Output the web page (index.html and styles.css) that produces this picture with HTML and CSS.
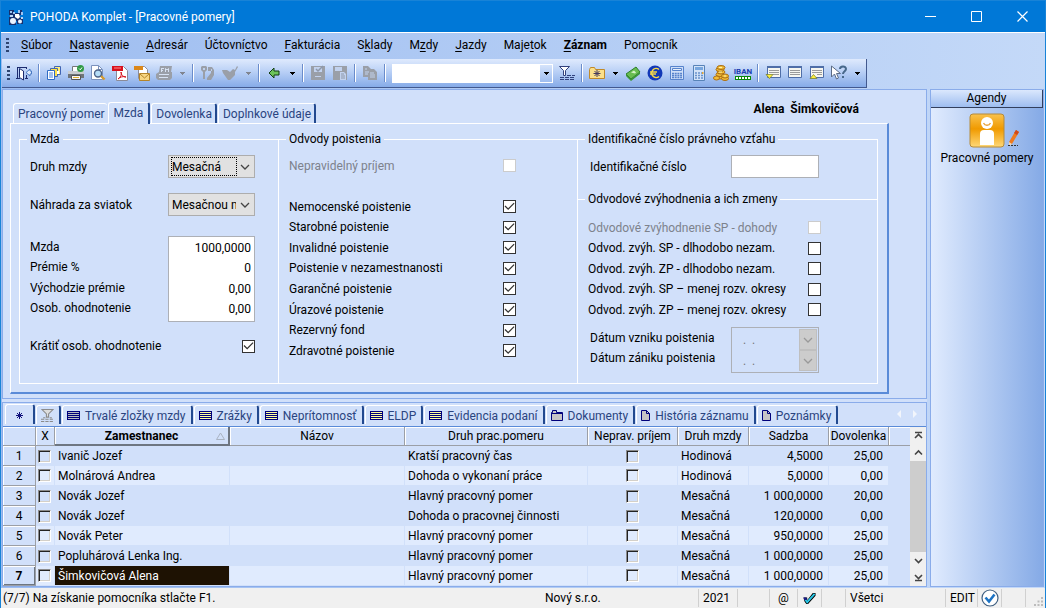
FILE: index.html
```
<!DOCTYPE html>
<html lang="sk">
<head>
<meta charset="utf-8">
<title>POHODA Komplet - [Pracovné pomery]</title>
<link rel="stylesheet" href="styles.css">
</head>
<body>
<svg class="sprite" aria-hidden="true">
  <symbol id="i-caret" viewBox="0 0 5 3"><path d="M0 0h5v1h-1v1h-1v1h-1v-1h-1v-1h-1z" fill="currentColor"/></symbol>
  <symbol id="i-chev" viewBox="0 0 10 6"><path d="M1 1l4 4 4-4" fill="none" stroke="currentColor" stroke-width="1.3"/></symbol>
  <symbol id="i-list" viewBox="0 0 13 9"><path d="M0 0h13v9H0z" fill="#00007b"/><path d="M1 1h11v1H1zM1 3h11v1H1zM1 5h11v1H1zM1 7h11v1H1z" fill="currentColor"/></symbol>
  <symbol id="i-folder" viewBox="0 0 12 11"><path d="M.5 10.500V2.500h1v-2h4v2h6v8z" fill="#c6c3c6" stroke="#00007b"/><path d="M1 3.500h10" stroke="#00007b" fill="none"/></symbol>
  <symbol id="i-page" viewBox="0 0 9 11"><path d="M.5.5h5l3 3v7h-8z" fill="#c6c3c6" stroke="#00007b"/><path d="M5.500.5v3h3" fill="none" stroke="#00007b"/></symbol>
</svg>
<div class="window">
  <header class="titlebar">
    <svg class="logo" viewBox="0 0 16 16"><path d="M1 1h5v3h4V1h4v5h-2v3h3v6H9v-3H8v4H1V8h2V6H1z" fill="#17306f"/><path d="M2 2h2v2H2zM5 3h2v2H5zM10 1h2v3h-2zM13 3h2v3h-2z" fill="#9dc4f2"/><circle cx="5" cy="12" r="3" fill="#e9f3ff"/><circle cx="12" cy="12.500" r="2" fill="#e9f3ff"/><path d="M7 5h4l1 3-2 2-3-2z" fill="#fff"/><path d="M2 6h3v2H2zM13 8h2v2h-2z" fill="#bcd7f7"/></svg>
    <h1 class="title">POHODA Komplet - [Pracovné pomery]</h1>
    <button class="winbtn" aria-label="Minimalizovať"><svg viewBox="0 0 11 11"><path d="M0 5.500h11" stroke="#fff"/></svg></button>
    <button class="winbtn" aria-label="Maximalizovať"><svg viewBox="0 0 11 11"><path d="M.5.5h10v10H.5z" stroke="#fff" fill="none"/></svg></button>
    <button class="winbtn" aria-label="Zavrieť"><svg viewBox="0 0 11 11"><path d="M.5.5l10 10M10.500.5l-10 10" stroke="#fff" stroke-width="1.200"/></svg></button>
  </header>

  <nav class="menu">
    <span class="grip"></span>
    <button><u>S</u>úbor</button><button><u>N</u>astavenie</button><button><u>A</u>dresár</button><button>Účtovní<u>c</u>tvo</button><button><u>F</u>akturácia</button><button>S<u>k</u>lady</button><button>M<u>z</u>dy</button><button><u>J</u>azdy</button><button>Maje<u>t</u>ok</button><button class="strong"><u>Z</u>áznam</button><button>Pom<u>o</u>cník</button>
  </nav>

  <div class="toolbar">
    <span class="grip"></span>
    <button class="tool" aria-label="Ukončiť"><svg viewBox="0 0 16 16"><path d="M1.500 2v11M0 13.500h4M1 2.500h10M10.500 3v1" fill="none" stroke="#1c2b6e"/><path d="M3.500 3.500l4 2.500v9l-4-2.500z" fill="#fff" stroke="#1c2b6e"/><path d="M10.500 10v4M9 13.500h3" stroke="#1c2b6e" fill="none"/><path d="M10 7.500l4-3.500v2h1.500v3H14v2z" fill="#dce9fb" stroke="#4a7ac4"/></svg></button>
    <span class="sep"></span>
    <button class="tool" aria-label="Agendy"><svg viewBox="0 0 16 16"><path d="M8.500 1.500h6v8h-6z" fill="#ffef7a" stroke="#4065b5"/><path d="M4.500 3.500h7v8h-7z" fill="#ffe14a" stroke="#4065b5"/><path d="M1.500 5.500h7v9h-7z" fill="#fff" stroke="#2f6cc4"/><path d="M3 8h4M3 10h4M3 12h4" stroke="#4a86dd"/><path d="M11 6h2v3h-2z" fill="#fff"/></svg></button>
    <button class="tool" aria-label="Tlač"><svg viewBox="0 0 16 16"><path d="M4.500 1.500h7v5h-7z" fill="#fff" stroke="#777"/><path d="M0 6h16v7H0z" fill="#6f757a"/><path d="M0 6h16v3H0z" fill="#c9cdd0"/><path d="M3.500 10.500h9v4h-9z" fill="#f7f7f7" stroke="#555"/><path d="M5 12h6v1H5z" fill="#e0b030"/><circle cx="12.500" cy="3.500" r="3.500" fill="#2f9a45"/><path d="M11 3.500l1.300 1.300L14 2.500" stroke="#fff" fill="none"/></svg></button>
    <button class="tool" aria-label="Náhľad"><svg viewBox="0 0 16 16"><path d="M1.500.5h7l4 4v10h-11z" fill="#fff" stroke="#7b92bd"/><path d="M8.500.5v4h4" fill="none" stroke="#7b92bd"/><path d="M10 10l4.500 4.500" stroke="#d59a2d" stroke-width="2.400"/><circle cx="8" cy="8.500" r="3.500" fill="#b5dcf6" stroke="#4c6389" stroke-width="1.400"/></svg></button>
    <button class="tool" aria-label="PDF"><svg viewBox="0 0 16 16"><path d="M4.500 1.500h7l4 4v10h-11z" fill="#fff" stroke="#8b8b98"/><path d="M0 1h11v5H0z" fill="#d8101c"/><path d="M2 3h7" stroke="#ff8b8b"/><path d="M6 14c3-2 4-5 3-7 0 3 2 5 5 5-3-1-6 0-8 2z" fill="none" stroke="#d8101c"/></svg></button>
    <button class="tool" aria-label="E-mail"><svg viewBox="0 0 16 16"><path d="M4.500 1.500h6l3 3v9h-9z" fill="#fff" stroke="#8b8b98"/><path d="M0 1h9v4H0z" fill="#db8719"/><path d="M5.500 8.500h10v7h-10z" fill="#f7d683" stroke="#b58428"/><path d="M6 9l4.500 4L15 9" fill="none" stroke="#b58428"/></svg></button>
    <button class="tool off" aria-label="Fiškálna tlač"><svg viewBox="0 0 16 16"><path d="M4 1h12l-1 6h1v6l-2 2H2l-2-2V9l3-2z"/><path d="M5 3.500h3M5.500 3v4M5 5.500h2M9.500 7V3.500l1.500 1.500 1.500-1.500V7M3 9.500h10M3 12.500h9" stroke="#d7e2f3" fill="none"/></svg></button>
    <button class="drop off" aria-label="Ďalšie možnosti tlače"><svg><use href="#i-caret"/></svg></button>
    <span class="sep"></span>
    <button class="tool off" aria-label="Kopírovať"><svg viewBox="0 0 16 16"><path d="M2 1h4l1 1v3L5 7v7H3V7L1 5V2zM8 2h4l2 3v5l-3 5H7v-2l4-5V6H8z"/><path d="M3 3h2v2H3zM11 4h1v2h-1z" fill="#bfd0ec"/></svg></button>
    <button class="tool off" aria-label="Prenos"><svg viewBox="0 0 16 16"><path d="M0 5h5l3 2 3-3 2 1 2-4 1 1-3 5v3l-5 5H6L1 8z"/></svg></button>
    <button class="drop off" aria-label="Ďalšie možnosti prenosu"><svg><use href="#i-caret"/></svg></button>
    <span class="sep"></span>
    <button class="tool" aria-label="Späť"><svg viewBox="0 0 16 16"><path d="M3 8l5-5v3h5v4H8v3z" fill="#6cc35a" stroke="#123f12"/></svg></button>
    <button class="drop" aria-label="História krokov"><svg><use href="#i-caret"/></svg></button>
    <span class="sep"></span>
    <button class="tool off" aria-label="Uložiť"><svg viewBox="0 0 16 16"><path d="M1 1h14v14H1z"/><path d="M4 2h8v5H4zM5 11h6v1H5z" fill="#c2d2ee"/><path d="M6 4l2 2 5-5" stroke="#8e98aa" fill="none" stroke-width="1.500"/></svg></button>
    <button class="tool off" aria-label="Uložiť kópiu"><svg viewBox="0 0 16 16"><path d="M1 1h14v14H1z"/><path d="M3 2h7v4H3zM8 7h4l2 2v6H8z" fill="#c2d2ee"/><path d="M9 9h3M9 11h4M9 13h4" stroke="#8e98aa"/></svg></button>
    <span class="sep"></span>
    <button class="tool off" aria-label="Prilepiť"><svg viewBox="0 0 16 16"><path d="M1 1h5l3 3h3l3 3v8H6v-3H1z"/><path d="M3 4h2M3 7h4M3 9h3M8 8h4M8 10h5M8 12h5" stroke="#c2d2ee"/></svg></button>
    <span class="sep"></span>
    <div class="search"><input type="text" aria-label="Hľadať"><button class="searchdrop" aria-label="Zoznam hľadania"><svg><use href="#i-caret"/></svg></button></div>
    <button class="tool" aria-label="Filter"><svg viewBox="0 0 16 16"><path d="M.5 1.500h10l-4 4v5h-2v-5z" fill="#fff" stroke="#31417c"/><path d="M1 12.500h15M1 14.500h15M8 10.500h8" stroke="#31417c" stroke-dasharray="4 1"/></svg></button>
    <span class="sep"></span>
    <button class="tool" aria-label="Nový záznam"><svg viewBox="0 0 16 16"><path d="M.5 4.500l1-2h4l1 2h9v9H.5z" fill="#fbe08b" stroke="#c08a2b"/><path d="M8 5v7M4.500 8.500h7M5.500 6l5 5M10.500 6l-5 5" stroke="#453a5c"/></svg></button>
    <button class="drop" aria-label="Priečinky"><svg><use href="#i-caret"/></svg></button>
    <button class="tool" aria-label="Pokladňa"><svg viewBox="0 0 16 16"><path d="M1 9l10-7 4 5-9 7z" fill="#69bd50" stroke="#2b7d2b"/><path d="M1 9v2l5 5 9-7V7l-9 7z" fill="#3c9637"/><path d="M10 8.500l-4-1 3-2 2 2z" fill="#d5f2c7"/></svg></button>
    <button class="tool" aria-label="Kurzy"><svg viewBox="0 0 16 16"><circle cx="8" cy="8" r="7.500" fill="#1238b7"/><path d="M12 4.500A4.500 4.500 0 1 0 12 11.500M3 7h7M3 9h6" fill="none" stroke="#f5d84a" stroke-width="1.500"/></svg></button>
    <button class="tool" aria-label="Kalkulačka"><svg viewBox="0 0 16 16"><path d="M1.500 1.500h13v13h-13z" fill="#cfdff8" stroke="#5783cc"/><path d="M3.500 3.500h9v2h-9z" fill="#e6effc" stroke="#5783cc"/><path d="M3 8.500h10M3 10.500h10M3 12.500h10" stroke="#5783cc" stroke-width="1.400" stroke-dasharray="2 .7"/></svg></button>
    <button class="tool" aria-label="Výpočty"><svg viewBox="0 0 16 16"><path d="M2.500.5h11v15h-11z" fill="#d4e3f8" stroke="#5783b8"/><path d="M4 2h8v3H4z" fill="#78a7df"/><path d="M4 8h8M4 10.500h8M4 13h8" stroke="#6992cc" stroke-width="1.500" stroke-dasharray="2 1"/><path d="M11 7h1.500v2H11z" fill="#e4a432"/></svg></button>
    <button class="tool" aria-label="Mince"><svg viewBox="0 0 16 16"><g fill="#f1bd39" stroke="#ab6d12"><ellipse cx="7" cy="12" rx="4" ry="2"/><ellipse cx="7" cy="9.500" rx="4" ry="2"/><ellipse cx="8" cy="7" rx="4" ry="2"/><ellipse cx="7" cy="4.500" rx="4" ry="2"/><ellipse cx="8" cy="2.500" rx="4" ry="2"/><ellipse cx="3.500" cy="13" rx="3" ry="2"/><ellipse cx="12" cy="13.500" rx="3.500" ry="2"/><ellipse cx="12" cy="11" rx="3.500" ry="2"/></g><path d="M6 2.500h3M6 7h3M11 11h2" stroke="#fff3a6"/></svg></button>
    <button class="tool iban" aria-label="Kontrola IBAN"><span>IBAN</span><svg viewBox="0 0 16 4"><path d="M0 0h16v4H0z" fill="#088a08"/><path d="M1 1h2v2H1zM4 1h2v2H4zM7 1h2v2H7zM10 1h2v2h-2zM13 1h2v2h-2z" fill="#fff"/></svg></button>
    <span class="sep"></span>
    <button class="tool" aria-label="Nasledujúci"><svg viewBox="0 0 16 16"><path d="M2.500 1.500h13v11h-13z" fill="#f6f6f0" stroke="#4f6ea8"/><path d="M2 1h14v2H2z" fill="#4f6ea8"/><path d="M4 5.500h10M4 7.500h10M8 9.500h6" stroke="#9a9a9a"/><path d="M1 9.500h7l-3.500 4z" fill="#ffef3a" stroke="#6f7a2a" stroke-width=".7"/></svg></button>
    <button class="tool" aria-label="Formulár"><svg viewBox="0 0 16 16"><path d="M1.500 1.500h13v11h-13z" fill="#f6f6f0" stroke="#4f6ea8"/><path d="M1 1h14v2H1z" fill="#4f6ea8"/><path d="M3 5.500h10M3 7.500h10M3 9.500h10" stroke="#9a9a9a"/></svg></button>
    <button class="tool" aria-label="Predchádzajúci"><svg viewBox="0 0 16 16"><path d="M1.500 1.500h13v11h-13z" fill="#f6f6f0" stroke="#4f6ea8"/><path d="M1 1h14v2H1z" fill="#4f6ea8"/><path d="M3 5.500h10M3 7.500h10M8 9.500h5" stroke="#9a9a9a"/><path d="M1 13.500h7l-3.500-4z" fill="#ffef3a" stroke="#6f7a2a" stroke-width=".7"/></svg></button>
    <button class="tool" aria-label="Pomocník"><svg viewBox="0 0 16 16"><path d="M.5 1v11l3-3 2 5 2-1-2-4.500h4z" fill="#fff" stroke="#5c6c86"/><path d="M9 4c0-3 6-3.500 6 0 0 2-3 2.500-3 5M12 11v2" fill="none" stroke="#48698c" stroke-width="2"/></svg></button>
    <button class="drop" aria-label="Možnosti pomocníka"><svg><use href="#i-caret"/></svg></button>
  </div>

  <div class="workspace">
    <main class="main">
      <section class="panel form">
        <div class="formhead">
          <div class="tabs">
            <button class="tab">Pracovný pomer</button><button class="tab active">Mzda</button><button class="tab">Dovolenka</button><button class="tab">Doplnkové údaje</button>
          </div>
          <strong class="person">Alena  Šimkovičová</strong>
        </div>
        <div class="page">
          <fieldset class="group pay">
            <legend>Mzda</legend>
            <div class="field"><label for="kind">Druh mzdy</label><span class="combo focus"><select id="kind"><option>Mesačná</option></select><svg><use href="#i-chev"/></svg></span></div>
            <div class="field holiday"><label for="holiday">Náhrada za sviatok</label><span class="combo"><select id="holiday"><option>Mesačnou mzdou</option></select><svg><use href="#i-chev"/></svg></span></div>
            <div class="amounts">
              <div class="stack"><label for="a1">Mzda</label><label for="a2">Prémie %</label><label for="a3">Východzie prémie</label><label for="a4">Osob. ohodnotenie</label></div>
              <div class="stack inputs"><input id="a1" type="text" value="1000,0000"><input id="a2" type="text" value="0"><input id="a3" type="text" value="0,00"><input id="a4" type="text" value="0,00"></div>
            </div>
            <label class="field">Krátiť osob. ohodnotenie<input type="checkbox" class="check" checked></label>
          </fieldset>
          <fieldset class="group levies">
            <legend>Odvody poistenia</legend>
            <label class="field disabled">Nepravidelný príjem<input type="checkbox" class="check" disabled></label>
            <div class="checks">
              <label class="field">Nemocenské poistenie<input type="checkbox" class="check" checked></label>
              <label class="field">Starobné poistenie<input type="checkbox" class="check" checked></label>
              <label class="field">Invalidné poistenie<input type="checkbox" class="check" checked></label>
              <label class="field">Poistenie v nezamestnanosti<input type="checkbox" class="check" checked></label>
              <label class="field">Garančné poistenie<input type="checkbox" class="check" checked></label>
              <label class="field">Úrazové poistenie<input type="checkbox" class="check" checked></label>
              <label class="field">Rezervný fond<input type="checkbox" class="check" checked></label>
              <label class="field">Zdravotné poistenie<input type="checkbox" class="check" checked></label>
            </div>
          </fieldset>
          <div class="column">
            <fieldset class="group ident">
              <legend>Identifikačné číslo právneho vzťahu</legend>
              <div class="field inset"><label for="idn">Identifikačné číslo</label><input id="idn" class="text" type="text"></div>
            </fieldset>
            <fieldset class="group relief">
              <legend>Odvodové zvýhodnenia a ich zmeny</legend>
              <div class="checks">
                <label class="field disabled">Odvodové zvýhodnenie SP - dohody<input type="checkbox" class="check" disabled></label>
                <label class="field">Odvod. zvýh. SP - dlhodobo nezam.<input type="checkbox" class="check"></label>
                <label class="field">Odvod. zvýh. ZP - dlhodobo nezam.<input type="checkbox" class="check"></label>
                <label class="field">Odvod. zvýh. SP – menej rozv. okresy<input type="checkbox" class="check"></label>
                <label class="field">Odvod. zvýh. ZP – menej rozv. okresy<input type="checkbox" class="check"></label>
              </div>
              <div class="dates inset">
                <div class="datelabels"><label for="d1">Dátum vzniku poistenia</label><label for="d2">Dátum zániku poistenia</label></div>
                <div class="dateinputs">
                  <div class="date"><input id="d1" type="text" value=".  ." disabled><button disabled aria-label="Kalendár vzniku"><svg><use href="#i-chev"/></svg></button></div>
                  <div class="date"><input id="d2" type="text" value=".  ." disabled><button disabled aria-label="Kalendár zániku"><svg><use href="#i-chev"/></svg></button></div>
                </div>
              </div>
            </fieldset>
          </div>
        </div>
      </section>

      <section class="panel records">
        <div class="rectabs">
          <button class="rtab active" aria-label="Zoznam"><svg class="ic9" viewBox="0 0 9 9"><path d="M4.500 1v7M1 4.500h7M2 2l5 5M7 2L2 7" stroke="#10107c" fill="none"/></svg></button>
          <button class="rtab" aria-label="Filter"><svg class="ic13" viewBox="0 0 12 12"><path d="M1 .5h10L7 4.500v3H5v-3z" fill="#ddd" stroke="#8b8b8b"/><path d="M0 9.500h12M0 11.500h12M2 8h2M8 8h2" stroke="#8b8b8b" stroke-dasharray="3 1"/></svg></button>
          <button class="rtab"><svg class="ic13 grey"><use href="#i-list"/></svg>Trvalé zložky mzdy</button>
          <button class="rtab"><svg class="ic13"><use href="#i-list"/></svg>Zrážky</button>
          <button class="rtab"><svg class="ic13"><use href="#i-list"/></svg>Neprítomnosť</button>
          <button class="rtab"><svg class="ic13"><use href="#i-list"/></svg>ELDP</button>
          <button class="rtab"><svg class="ic13"><use href="#i-list"/></svg>Evidencia podaní</button>
          <button class="rtab"><svg class="ic12"><use href="#i-folder"/></svg>Dokumenty</button>
          <button class="rtab"><svg class="ic9"><use href="#i-page"/></svg>História záznamu</button>
          <button class="rtab"><svg class="ic9"><use href="#i-page"/></svg>Poznámky</button>
          <span class="scrolltabs"><svg viewBox="0 0 22 8"><path d="M5 0v8L1 4zM17 0v8l4-4z" fill="#f2f5fb"/></svg></span>
        </div>
        <div class="gridwrap">
          <table class="grid">
            <colgroup><col class="c-no"><col class="c-x"><col class="c-emp"><col><col class="c-rel"><col class="c-irr"><col class="c-kind"><col class="c-rate"><col class="c-hol"><col class="c-end"></colgroup>
            <thead><tr><th></th><th>X</th><th class="sorted"><div class="sort">Zamestnanec<svg viewBox="0 0 9 8"><path d="M4.500 1L.5 7.500h8z" fill="none" stroke="#a9b3c2"/></svg></div></th><th>Názov</th><th>Druh prac.pomeru</th><th>Neprav. príjem</th><th>Druh mzdy</th><th>Sadzba</th><th>Dovolenka</th><th></th></tr></thead>
            <tbody>
              <tr><th>1</th><td><input type="checkbox" class="sunken" aria-label="Označiť 1"></td><td>Ivanič Jozef</td><td></td><td>Kratší pracovný čas</td><td class="mid"><input type="checkbox" class="sunken" aria-label="Nepravidelný 1"></td><td>Hodinová</td><td class="num">4,5000</td><td class="num">25,00</td><td class="rest"></td></tr>
              <tr class="alt"><th>2</th><td><input type="checkbox" class="sunken" aria-label="Označiť 2"></td><td>Molnárová Andrea</td><td></td><td>Dohoda o vykonaní práce</td><td class="mid"><input type="checkbox" class="sunken" aria-label="Nepravidelný 2"></td><td>Hodinová</td><td class="num">5,0000</td><td class="num">0,00</td><td class="rest"></td></tr>
              <tr><th>3</th><td><input type="checkbox" class="sunken" aria-label="Označiť 3"></td><td>Novák Jozef</td><td></td><td>Hlavný pracovný pomer</td><td class="mid"><input type="checkbox" class="sunken" aria-label="Nepravidelný 3"></td><td>Mesačná</td><td class="num">1 000,0000</td><td class="num">20,00</td><td class="rest"></td></tr>
              <tr><th>4</th><td><input type="checkbox" class="sunken" aria-label="Označiť 4"></td><td>Novák Jozef</td><td></td><td>Dohoda o pracovnej činnosti</td><td class="mid"><input type="checkbox" class="sunken" aria-label="Nepravidelný 4"></td><td>Mesačná</td><td class="num">120,0000</td><td class="num">0,00</td><td class="rest"></td></tr>
              <tr class="alt"><th>5</th><td><input type="checkbox" class="sunken" aria-label="Označiť 5"></td><td>Novák Peter</td><td></td><td>Hlavný pracovný pomer</td><td class="mid"><input type="checkbox" class="sunken" aria-label="Nepravidelný 5"></td><td>Mesačná</td><td class="num">950,0000</td><td class="num">25,00</td><td class="rest"></td></tr>
              <tr><th>6</th><td><input type="checkbox" class="sunken" aria-label="Označiť 6"></td><td>Popluhárová Lenka Ing.</td><td></td><td>Hlavný pracovný pomer</td><td class="mid"><input type="checkbox" class="sunken" aria-label="Nepravidelný 6"></td><td>Mesačná</td><td class="num">1 000,0000</td><td class="num">25,00</td><td class="rest"></td></tr>
              <tr class="alt current"><th>7</th><td><input type="checkbox" class="sunken" aria-label="Označiť 7"></td><td class="selected">Šimkovičová Alena</td><td></td><td>Hlavný pracovný pomer</td><td class="mid"><input type="checkbox" class="sunken" aria-label="Nepravidelný 7"></td><td>Mesačná</td><td class="num">1 000,0000</td><td class="num">25,00</td><td class="rest"></td></tr>
            </tbody>
          </table>
          <div class="scroll">
            <button aria-label="Na začiatok"><svg viewBox="0 0 9 9"><path d="M1 1.500h7M1 7l3.500-3.500L8 7" fill="none" stroke="#444" stroke-width="1.600"/></svg></button>
            <button aria-label="Hore"><svg viewBox="0 0 9 9"><path d="M1 6.500L4.500 3 8 6.500" fill="none" stroke="#444" stroke-width="1.600"/></svg></button>
            <div class="thumb"></div>
            <button aria-label="Dole"><svg viewBox="0 0 9 9"><path d="M1 3l3.500 3.500L8 3" fill="none" stroke="#444" stroke-width="1.600"/></svg></button>
            <button aria-label="Na koniec"><svg viewBox="0 0 9 9"><path d="M1 2l3.500 3.500L8 2M1 7.500h7" fill="none" stroke="#444" stroke-width="1.600"/></svg></button>
          </div>
        </div>
      </section>
    </main>

    <aside class="side">
      <h2 class="sidehead">Agendy</h2>
      <button class="agenda">
        <svg class="agendaicon" viewBox="0 0 50 36"><defs><linearGradient id="og" x1="0" y1="0" x2="0" y2="1"><stop offset="0" stop-color="#f9c24e"/><stop offset=".45" stop-color="#f09a00"/><stop offset="1" stop-color="#ffd877"/></linearGradient></defs><rect x="1" y="1" width="34" height="33" rx="3" fill="url(#og)" stroke="#b58a3a"/><circle cx="18" cy="10" r="6" fill="#fff"/><path d="M14.500 10c1.500 3 5.500 3 7 0" fill="none" stroke="#e8a33a" stroke-width="1.400"/><path d="M11 32V21q0-4 4-4h6q4 0 4 4v11z" fill="#fff"/><path d="M47 17l3 2-7 12-3 1v-3z" fill="#ee7a1e"/><path d="M47 17l3 2-2 3-3-2z" fill="#d0491a"/><path d="M40 29l3 2-3 2z" fill="#f3d9b0"/><path d="M39 32.500h10" stroke="#333" stroke-dasharray="2 1"/></svg>
        <span>Pracovné pomery</span>
      </button>
    </aside>
  </div>

  <footer class="status">
    <span class="msg">(7/7) Na získanie pomocníka stlačte F1.</span>
    <span class="firm">Nový s.r.o.</span>
    <span class="cell w39">2021</span><span class="cell w32"></span><span class="cell w28 mid">@</span>
    <span class="cell w24 mid"><svg class="ic13" viewBox="0 0 13 14"><path d="M0 6h4v3L10 1h3v3L5 13H3L1 10z" fill="#000"/><path d="M2 8l2 3 8-9" stroke="#28c8e8" stroke-width="2" fill="none"/><path d="M0 6h3l1 2-3 1z" fill="#1b1b8b"/></svg></span>
    <span class="cell w24"></span><span class="cell w100">Všetci</span><span class="cell w32">EDIT</span>
    <span class="cell w24 mid"><svg class="ok" viewBox="0 0 18 18"><circle cx="9" cy="9" r="8" fill="#fff" stroke="#3f5f80" stroke-width="1.200"/><path d="M4.500 8.500L8 12.500 13.500 5.500" fill="none" stroke="#1c73c4" stroke-width="2.600"/></svg></span>
    <span class="cell w24"></span>
    <span class="cell w20 grab"><svg class="ic9" viewBox="0 0 9 9"><path d="M7 0h2v2H7zM7 3.500h2v2H7zM7 7h2v2H7zM3.500 3.500h2v2h-2zM3.500 7h2v2h-2zM0 7h2v2H0z" fill="#bcbcbc"/></svg></span>
  </footer>
</div>
</body>
</html>
```
FILE: styles.css
```
* { box-sizing: border-box; }

:root {
  --panel: #d1e0fa;
  --line: #8aacea;
  --navy: #2a4480;
}

body {
  margin: 0;
  font: 12px/16px Roboto, "Noto Sans", sans-serif;
  color: #000;
}

button, input, select { font: inherit; color: inherit; margin: 0; }
button { border: 0; padding: 0; background: none; }
svg { display: block; flex: none; }
.sprite { position: absolute; width: 0; height: 0; }

.window {
  display: flex;
  flex-direction: column;
  min-height: 100vh;
  border: 1px solid #1883d7;
  border-top: 0;
  background: linear-gradient(90deg, #9ebdf0, #c4d9f8);
}

/* title bar */
.titlebar {
  display: flex;
  align-items: center;
  height: 33px;
  padding-left: 7px;
  background: #0078d7;
  border-top: 1px solid #1883d7;
  border-bottom: 1px solid #fff;
  color: #fff;
}
.logo { width: 16px; height: 16px; }
.title { flex: 1; margin: 0 0 0 6px; font-size: 12px; font-weight: 400; }
.winbtn { display: grid; place-items: center; width: 46px; height: 30px; }
.winbtn svg { width: 11px; height: 11px; }

/* menu */
.menu { display: flex; align-items: center; gap: 1px; height: 26px; padding: 0 0 2px 5px; }
.menu button { height: 24px; padding: 0 8px; }
.menu .grip { margin-right: 3px; }
.strong { font-weight: 700; }
u { text-underline-offset: 2px; }
.grip {
  width: 3px;
  height: 15px;
  background: repeating-linear-gradient(#2d4470 0 2px, transparent 2px 4px);
}

/* toolbar */
.toolbar {
  display: flex;
  align-items: center;
  align-self: flex-start;
  height: 29px;
  padding: 0 2px 0 5px;
  margin-left: 1px;
  background: linear-gradient(#dfeafd, #b9d0f6 45%, #86abe8);
  border-right: 1px solid #42598f;
  border-bottom: 1px solid #42598f;
}
.toolbar .grip { margin-right: 3px; }
.tool { display: grid; place-items: center; width: 22px; height: 24px; }
.tool svg { width: 16px; height: 16px; }
.off svg { fill: #9a9fa8; color: #808590; }
.drop { display: grid; place-items: center; width: 14px; height: 24px; }
.drop svg, .searchdrop svg { width: 5px; height: 3px; }
.sep { width: 2px; height: 18px; margin: 0 3px; background: linear-gradient(90deg, #6a8ccb 50%, #fff 50%); }
.search { display: flex; width: 161px; height: 19px; margin: 0 3px; padding: 1px; background: #fff; }
.search input { flex: 1; min-width: 0; border: 0; padding: 0 4px; background: #fff; }
.searchdrop { display: grid; place-items: center; width: 12px; background: linear-gradient(#d6e4fb, #9ebdf0); }
.iban { align-content: center; font-size: 8px; line-height: 9px; font-weight: 700; color: #1c3fb0; }
.tool.iban svg { height: 4px; }

/* workspace */
.workspace { display: flex; flex: 1; gap: 3px; padding: 1px 1px 0; }
.main { display: flex; flex: 1; flex-direction: column; gap: 3px; min-width: 0; background: var(--panel); }
.panel { border: 1px solid var(--line); background: var(--panel); }

.form { padding: 0 37px 4px 7px; }
.formhead { display: flex; justify-content: space-between; align-items: flex-end; height: 33px; padding-left: 3px; }
.person { padding: 0 30px 6px 0; white-space: pre; }
.tabs { display: flex; align-items: flex-end; gap: 1px; }
.tab, .rtab {
  border: 1px solid #fff;
  border-width: 1px 0 0 1px;
  border-right: 2px solid #22498f;
  border-radius: 3px 3px 0 0;
  color: var(--navy);
  background: var(--panel);
}
.tab { height: 20px; padding: 0 3px 0 4px; }
.tab.active { height: 22px; padding: 0 5px 2px; margin-bottom: -1px; }
.tab:first-child { padding-right: 2px; border-right: 0; }

.page {
  display: grid;
  grid-template-columns: 259fr 299fr 301fr;
  padding: 7px 9px 8px 8px;
  border: 1px solid #fff;
  border-right: 2px solid #5a8bd8;
  border-bottom: 2px solid #5a8bd8;
}
.column { display: flex; flex-direction: column; }
.group { min-width: 0; margin: 0; padding: 0 23px 10px 10px; border: 1px solid #fff; }
.group legend { height: 16px; margin-left: -3px; padding: 0 3px; }
.pay { border-right: 0; }
.levies { border-right: 0; padding-right: 61px; }
.ident { border-bottom: 0; padding: 0 56px 21px 10px; }
.relief { flex: 1; margin-top: -8px; padding-right: 56px; }

.field { display: flex; justify-content: space-between; align-items: center; }
label { white-space: nowrap; }
.disabled { color: #7d828c; }
.inset { padding: 0 2px; }
.pay > .field:nth-child(2) { margin-top: 8px; }
.holiday { margin-top: 15px; }
.amounts { display: flex; justify-content: space-between; margin: 20px 0 16px; }
.stack { display: grid; grid-auto-rows: 21px 20px; align-items: center; }
.inputs { width: 87px; padding-bottom: 2px; border: 1px solid #adb0b6; background: #fff; }
.inputs input { width: 100%; height: 18px; padding: 0 3px; border: 0; background: #fff; text-align: right; }
.levies > .field { height: 21px; margin-top: 8px; }
.levies .checks { margin-top: 20px; }
.ident .field { margin-top: 8px; }
.relief .checks { margin-top: 10px; }
.checks { display: grid; grid-auto-rows: 21px 20px 21px 20px 21px 21px 20px 21px; }

.combo { display: grid; width: 87px; height: 23px; border: 1px solid #adadad; background: #e1e1e1; align-items: center; }
.combo > * { grid-area: 1 / 1; }
.combo select { appearance: none; width: 66px; height: 19px; margin-left: 2px; padding: 0 1px; border: 0; border-radius: 0; background: none; overflow: hidden; text-overflow: clip; }
.combo.focus select { outline: 1px dotted #000; outline-offset: -1px; }
.combo svg { width: 10px; height: 6px; margin-right: 4px; justify-self: end; color: #444; }

.text { width: 88px; height: 23px; border: 1px solid #adb0b6; background: #fff; }
.check { appearance: none; width: 13px; height: 13px; border: 1px solid #333; background: #fff; }
.check:disabled { border-color: #ccc; }
.check:checked::before {
  content: "";
  display: block;
  height: 11px;
  background: #333;
  clip-path: polygon(5% 50%, 13% 42%, 38% 65%, 88% 15%, 96% 23%, 38% 81%);
}

.dates { display: flex; justify-content: space-between; margin-top: 7px; }
.datelabels { display: grid; grid-auto-rows: 20px; align-content: start; align-items: center; padding-top: 1px; }
.dateinputs { width: 88px; padding: 1px; border: 1px solid #adb0b6; }
.date { display: flex; height: 21px; }
.date input { flex: 1; min-width: 0; padding: 0 10px; border: 0; background: none; color: #777; white-space: pre; }
.date button { display: grid; place-items: center; width: 18px; border: 1px solid #bfbfbf; background: #ccc; color: #999; }
.date svg { width: 10px; height: 6px; }

/* record list */
.rectabs { display: flex; align-items: flex-end; gap: 1px; height: 24px; padding: 0 8px 2px 2px; border-bottom: 1px solid #5a8bd8; }
.rtab { display: flex; align-items: center; gap: 5px; height: 19px; padding: 1px 5px 0 4px; white-space: nowrap; }
.rtab.active { width: 30px; height: 20px; padding-left: 9px; }
.scrolltabs { margin-left: auto; padding-bottom: 6px; }
.scrolltabs svg { width: 22px; height: 8px; }
.ic13 { width: 13px; height: 13px; color: #ffffa0; }
.grey { color: #b8bcc0; }
.ic12 { width: 12px; height: 11px; }
.ic9 { width: 9px; height: 11px; }

.gridwrap { display: flex; }
.grid { flex: 1; width: 0; table-layout: fixed; border-collapse: separate; border-spacing: 0; }
.c-no { width: 33px; }
.c-x { width: 19px; }
.c-emp { width: 175px; }
.c-rel { width: 183px; }
.c-irr { width: 90px; }
.c-kind { width: 71px; }
.c-rate { width: 80px; }
.c-hol { width: 60px; }
.c-end { width: 21px; }
.grid th, .grid td { height: 20px; padding: 0; white-space: nowrap; }
.grid th {
  font-weight: 400;
  text-align: center;
  border: 1px solid #9b9fa6;
  border-width: 0 1px 1px 0;
  box-shadow: inset 1px 1px #fff;
}
.grid thead th { height: 19px; }
.grid thead th:last-child { border-right: 0; }
.grid thead .sorted { font-weight: 700; border-right: 2px solid #6e7681; border-bottom: 2px solid #6e7681; }
.sort { display: flex; align-items: center; justify-content: center; gap: 38px; padding-left: 47px; }
.sort svg { width: 9px; height: 8px; }
.grid td { padding-left: 3px; border-right: 1px solid var(--panel); }
.grid td:nth-child(2) { padding-left: 2px; }
.alt td { background: #e0ebfe; }
.grid .alt td { border-bottom: 1px solid var(--panel); }
.grid td.rest { background: var(--panel); border: 0; }
.grid td.mid { padding: 0; }
.mid .sunken { margin: 0 auto; }
.grid td.num { padding-right: 5px; text-align: right; }
.grid .alt td.selected { background: #1e1203; color: #fff; }
.grid .current th { font-weight: 700; box-shadow: inset 1px 1px #fff, inset -1px -1px #6e7681; }
.sunken { appearance: none; display: block; width: 13px; height: 13px; border: 1px solid; border-color: #8b8b8b #fff #fff #8b8b8b; box-shadow: inset 1px 1px #222, inset -1px -1px #d4d0c8; background: none; }

.scroll { display: flex; flex-direction: column; width: 16px; background: #f0f0f0; }
.scroll button { display: grid; place-items: center; height: 17px; }
.scroll svg { width: 9px; height: 9px; }
.thumb { flex: 1; background: #cdcdcd; }

/* agenda bar */
.side { width: 114px; border: 1px solid var(--line); background: linear-gradient(90deg, #e0ebfe, #85aae6); }
.sidehead {
  height: 18px;
  margin: 0;
  font-size: 12px;
  line-height: 17px;
  font-weight: 400;
  text-align: center;
  background: linear-gradient(#dbe8fd, #9ebdf0);
  border-right: 1px solid #333f5c;
  border-bottom: 1px solid #333f5c;
}
.agenda { display: block; width: 100%; padding-top: 5px; }
.agendaicon { width: 50px; height: 36px; margin: 0 auto 1px 38px; }

/* status bar */
.status { display: flex; align-items: center; height: 20px; margin-top: 1px; background: #f0f0f0; }
.msg { flex: 1; padding-left: 2px; }
.firm { width: 153px; }
.cell { display: flex; align-items: center; height: 18px; padding-left: 4px; border-left: 1px solid #d0d0d0; }
.cell.mid { justify-content: center; padding: 0; }
.w20 { width: 20px; }
.w24 { width: 24px; }
.w28 { width: 28px; }
.w32 { width: 32px; }
.w39 { width: 39px; }
.w100 { width: 100px; }
.ok { width: 18px; height: 18px; }
.grab { align-items: flex-end; padding-left: 8px; }
```
